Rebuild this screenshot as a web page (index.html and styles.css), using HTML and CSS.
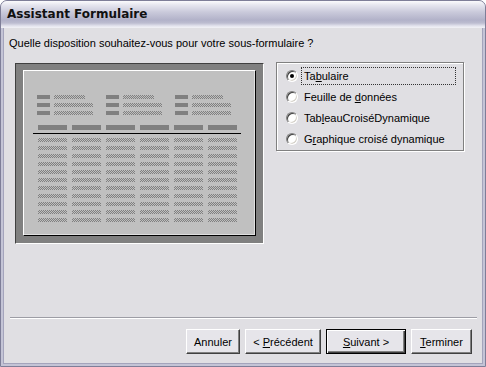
FILE: index.html
```html
<!DOCTYPE html>
<html lang="fr">
<head>
  <meta charset="UTF-8" />
  <title>Assistant Formulaire</title>
  <link rel="stylesheet" href="styles.css">
</head>
<body>
  <div class="window">
    <div class="titlebar">Assistant Formulaire</div>

    <div class="dialog">
      <p class="question">Quelle disposition souhaitez-vous pour votre sous-formulaire ?</p>

      <div class="content">
        <div class="preview">
          <div class="sheet">
            <div class="fields">
              <div class="field-group">
                <span class="lbl"></span><span class="fld short"></span>
                <span class="lbl"></span><span class="fld"></span>
                <span class="lbl"></span><span class="fld"></span>
              </div>
              <div class="field-group">
                <span class="lbl"></span><span class="fld short"></span>
                <span class="lbl"></span><span class="fld"></span>
                <span class="lbl"></span><span class="fld"></span>
              </div>
              <div class="field-group">
                <span class="lbl"></span><span class="fld short"></span>
                <span class="lbl"></span><span class="fld"></span>
                <span class="lbl"></span><span class="fld"></span>
              </div>
            </div>
            <div class="heads">
              <span></span><span></span><span></span><span></span><span></span><span></span>
            </div>
            <div class="rule"></div>
            <div class="cells">
              <span></span><span></span><span></span><span></span><span></span><span></span>
              <span></span><span></span><span></span><span></span><span></span><span></span>
              <span></span><span></span><span></span><span></span><span></span><span></span>
              <span></span><span></span><span></span><span></span><span></span><span></span>
              <span></span><span></span><span></span><span></span><span></span><span></span>
              <span></span><span></span><span></span><span></span><span></span><span></span>
              <span></span><span></span><span></span><span></span><span></span><span></span>
              <span></span><span></span><span></span><span></span><span></span><span></span>
              <span></span><span></span><span></span><span></span><span></span><span></span>
              <span></span><span></span><span></span><span></span><span></span><span></span>
              <span></span><span></span><span></span><span></span><span></span><span></span>
            </div>
          </div>
        </div>

        <div class="options">
          <div class="option">
            <span class="radio checked"></span>
            <span class="label focus">Ta<u>b</u>ulaire</span>
          </div>
          <div class="option">
            <span class="radio"></span>
            <span class="label">Feuille de <u>d</u>onnées</span>
          </div>
          <div class="option">
            <span class="radio"></span>
            <span class="label">Tab<u>l</u>eauCroiséDynamique</span>
          </div>
          <div class="option">
            <span class="radio"></span>
            <span class="label">G<u>r</u>aphique croisé dynamique</span>
          </div>
        </div>
      </div>

      <div class="footer">
        <div class="separator"></div>
        <div class="buttons">
          <button class="btn cancel">Annuler</button>
          <button class="btn prev">&lt; <u>P</u>récédent</button>
          <button class="btn next default"><u>S</u>uivant &gt;</button>
          <button class="btn finish"><u>T</u>erminer</button>
        </div>
      </div>
    </div>
  </div>
</body>
</html>
```

FILE: styles.css
```css
:root {
  --face: #e0dfe3;
  --shadow: #808080;
  --dark: #404040;
  --sheet: #c0c0c0;
  --frame: #c4c4d6;
}

* {
  box-sizing: border-box;
}

html, body {
  margin: 0;
  padding: 0;
  background: #fff;
  font-family: "Liberation Sans", Arial, sans-serif;
  font-size: 11px;
  color: #000;
}

.window {
  width: 486px;
  height: 367px;
  display: flex;
  flex-direction: column;
  border: 1px solid #7e7e98;
  border-radius: 7px 7px 0 0;
  background: var(--frame);
  overflow: hidden;
}

.titlebar {
  height: 27px;
  line-height: 27px;
  padding-left: 6px;
  font-family: "DejaVu Sans", sans-serif;
  font-weight: bold;
  font-size: 12px;
  color: #111;
  background: linear-gradient(#fbfbfd 0, #e6e6ef 4px, #cacadb 11px, #b2b2c9 19px, #bcbcd0 22px, #e4e4ee 25px, #f2f2f6 27px);
}

.dialog {
  flex: 1;
  display: flex;
  flex-direction: column;
  margin: 0 2px 2px;
  padding-top: 8px;
  background: var(--face);
  border: 1px solid #a4a4bc;
  border-top: none;
}

.question {
  margin: 0;
  padding-left: 5px;
  line-height: 14px;
}

.content {
  display: flex;
  align-items: flex-start;
  gap: 12px;
  margin: 12px 0 0 11px;
}

/* aperçu du formulaire */
.preview {
  width: 249px;
  height: 181px;
  margin-top: 1px;
  padding: 6px 7px 7px;
  background: var(--shadow);
  border: 1px solid;
  border-color: var(--dark) #fff #fff var(--dark);
}

.sheet {
  height: 100%;
  padding: 24px 0 0 9px;
  background: var(--sheet);
  border: 1px solid;
  border-color: #fff #000 #000 #fff;
  box-shadow: inset -1px -1px 0 #dfdfdf;
}

.fields {
  display: flex;
  gap: 13px;
  margin-left: 4px;
}

.field-group {
  display: grid;
  grid-template-columns: 13px 39px;
  grid-auto-rows: 4px;
  gap: 4px;
}

.lbl {
  background: var(--shadow);
}

.fld,
.cells span {
  background: repeating-conic-gradient(#808080 0% 25%, #c0c0c0 0% 50%) 0 0 / 2px 2px;
}

.fld.short {
  width: 31px;
}

.heads {
  display: flex;
  gap: 5px;
  margin: 10px 0 0 5px;
}

.heads span {
  width: 29px;
  height: 5px;
  background: var(--shadow);
}

.rule {
  width: 208px;
  height: 1px;
  margin-top: 3px;
  background: #000;
}

.cells {
  display: grid;
  grid-template-columns: repeat(6, 29px);
  grid-auto-rows: 4px;
  gap: 4px 5px;
  margin: 4px 0 0 5px;
}

/* choix de disposition */
.options {
  width: 188px;
  height: 89px;
  padding: 2px 0 0 9px;
  border: 1px solid var(--shadow);
  box-shadow: inset 1px 1px 0 #fff, 1px 1px 0 #fff;
}

.option {
  display: flex;
  align-items: center;
  gap: 3px;
  height: 21px;
}

.radio {
  position: relative;
  flex: 0 0 12px;
  height: 12px;
  border-radius: 50%;
  background: #fff;
  border: 1px solid;
  border-color: var(--shadow) #fff #fff var(--shadow);
  box-shadow: inset 1px 1px 0 var(--dark), inset -1px -1px 0 #d4d0c8;
}

.radio.checked::after {
  content: "";
  position: absolute;
  top: 3px;
  left: 3px;
  width: 4px;
  height: 4px;
  border-radius: 50%;
  background: #000;
}

.label {
  flex: 0 0 155px;
  line-height: 16px;
  padding: 0 1px 0 2px;
  border: 1px dotted transparent;
  white-space: nowrap;
}

.label.focus {
  border-color: #333;
}

/* pied */
.footer {
  margin-top: auto;
  padding-bottom: 9px;
}

.separator {
  height: 2px;
  margin: 0 5px 10px 6px;
  border-top: 1px solid #9d9da5;
  border-bottom: 1px solid #fff;
}

.buttons {
  display: flex;
  justify-content: flex-end;
  gap: 5px;
  padding-right: 10px;
}

.btn {
  height: 25px;
  padding: 0;
  font-family: inherit;
  font-size: 11px;
  color: #000;
  background: #e6e5ea;
  border: 1px solid;
  border-color: #fff var(--dark) var(--dark) #fff;
  box-shadow: inset -1px -1px 0 var(--shadow);
}

.btn.default {
  border: 1px solid #000;
  box-shadow: inset 1px 1px 0 #fff, inset -1px -1px 0 var(--dark), inset -2px -2px 0 var(--shadow);
}

.cancel { width: 54px; }
.prev { width: 76px; }
.next { width: 80px; }
.finish { width: 61px; }
```
